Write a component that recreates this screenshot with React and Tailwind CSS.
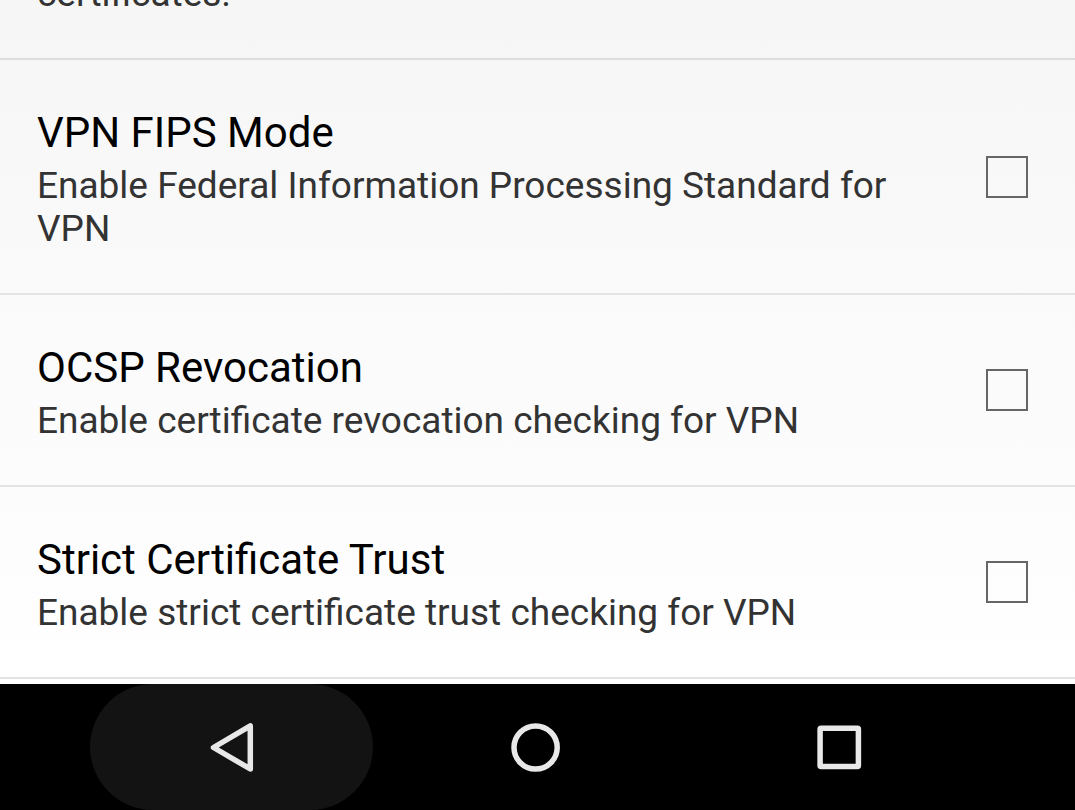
import { useState } from "react";

const SETTINGS = [
  {
    id: "fips",
    title: "VPN FIPS Mode",
    summary: "Enable Federal Information Processing Standard for VPN",
  },
  {
    id: "ocsp",
    title: "OCSP Revocation",
    summary: "Enable certificate revocation checking for VPN",
  },
  {
    id: "strict-trust",
    title: "Strict Certificate Trust",
    summary: "Enable strict certificate trust checking for VPN",
  },
];

function SettingRow({ id, title, summary }) {
  const [checked, setChecked] = useState(false);
  return (
    <li className="border-b-2 border-[#e3e3e3]">
      <label htmlFor={id} className="flex items-center gap-12 pr-[47px] pl-[37px]">
        <span className="flex flex-1 flex-col gap-[7px] pt-12 pb-[43px]">
          <span className="text-[42px] leading-[49px] text-black">{title}</span>
          <span className="text-[37px] leading-[43px] text-[#333333]">{summary}</span>
        </span>
        <input
          id={id}
          type="checkbox"
          checked={checked}
          onChange={(e) => setChecked(e.target.checked)}
          className="size-[42px] shrink-0 appearance-none border-2 border-[#666666] checked:bg-[#666666]"
        />
      </label>
    </li>
  );
}

function NavButton({ label, pressed, children }) {
  return (
    <button
      type="button"
      aria-label={label}
      className={`flex h-[126px] w-[283px] items-center justify-center rounded-full ${
        pressed ? "bg-[#131313]" : "bg-black"
      }`}
    >
      <svg
        viewBox="0 0 60 60"
        className="size-[60px]"
        fill="none"
        stroke="#e8e8e8"
        strokeWidth="5.5"
        strokeLinejoin="round"
        aria-hidden="true"
      >
        {children}
      </svg>
    </button>
  );
}

export default function App() {
  return (
    <div className="flex min-h-screen flex-col bg-white font-[Roboto,sans-serif]">
      <main className="flex-1 bg-linear-to-b from-[#f6f6f6] to-white">
        <ul>
          <li className="flex h-[60px] items-end overflow-hidden border-b-2 border-[#dddddd] px-[37px] pb-[43px]">
            <span className="text-[37px] leading-[43px] text-[#333333]">certificates.</span>
          </li>
          {SETTINGS.map((s) => (
            <SettingRow key={s.id} {...s} />
          ))}
        </ul>
      </main>
      <nav className="flex justify-center gap-[21px] bg-black pr-1">
        <NavButton label="Back" pressed>
          <path d="M48.3 8.9 L48.3 52 L11.5 30.500 Z" />
        </NavButton>
        <NavButton label="Home">
          <circle cx="29.600" cy="30.500" r="21.600" />
        </NavButton>
        <NavButton label="Recent apps">
          <rect x="10.100" y="11.200" width="38.300" height="38.300" rx="1" />
        </NavButton>
      </nav>
    </div>
  );
}
